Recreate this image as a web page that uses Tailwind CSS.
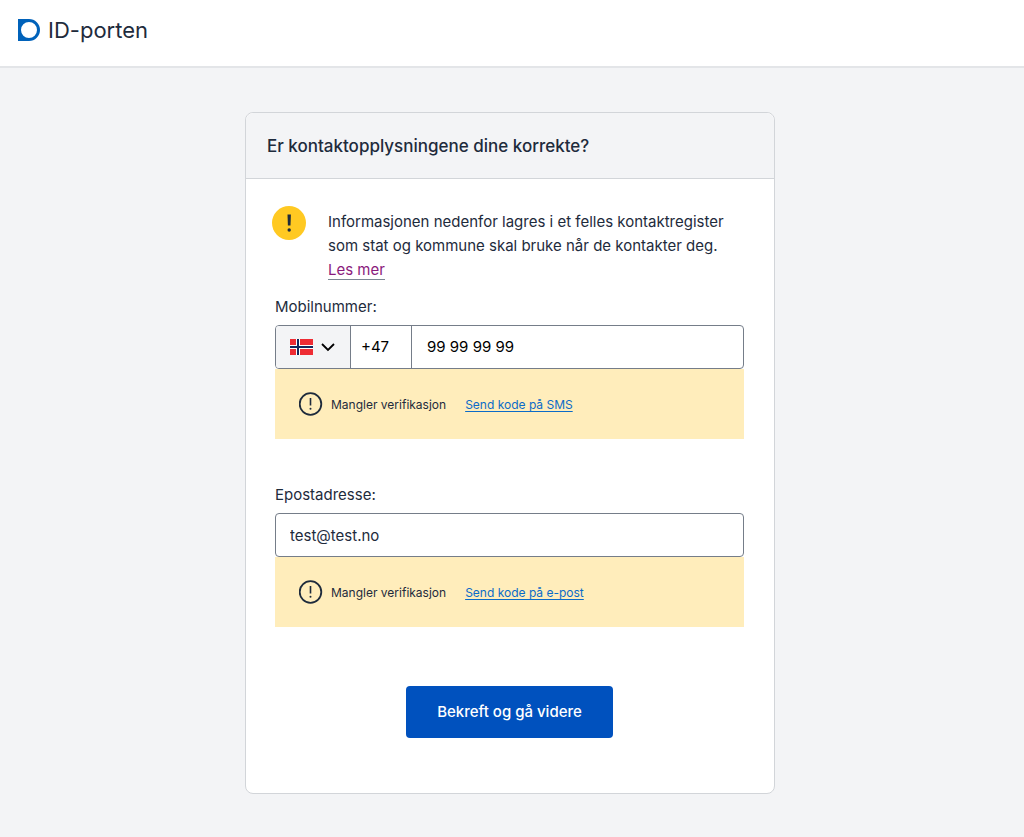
<!DOCTYPE html>
<html lang="no">

<head>
  <meta charset="UTF-8" />
  <meta name="viewport" content="width=device-width, initial-scale=1.0" />
  <title>ID-porten</title>

  <script src="https://cdn.jsdelivr.net/npm/@tailwindcss/browser@4"></script>
</head>

<body class="min-h-screen bg-[#f3f4f6] font-['Inter',sans-serif] text-[15px] leading-6 text-[#1e2b3c]">

  <header class="border-b-2 border-[#e3e5e8] bg-white px-[18px] pt-[18px] pb-6">
    <a href="#" class="flex items-center gap-2">
      <svg class="h-[22px] w-[22px]" viewBox="0 0 22 22" aria-hidden="true">
        <path fill="#0062ba" fill-rule="evenodd" d="M0 0h11a11 11 0 0 1 0 22H0zM11 3a8 8 0 1 0 0 16a8 8 0 0 0 0-16z" />
      </svg>
      <span class="text-[22px] leading-6">ID-porten</span>
    </a>
  </header>

  <main class="pt-11 pr-1 pb-11">
    <form class="mx-auto max-w-[530px] rounded-lg border border-[#d2d5d9] bg-white">

      <div class="rounded-t-lg border-b border-[#d2d5d9] bg-[#f3f4f6] px-[21px] pt-[21px] pb-5">
        <h1 class="text-[17px] leading-6 font-medium">Er kontaktopplysningene dine korrekte?</h1>
      </div>

      <div class="pt-[31px] pr-[30px] pb-[55px] pl-[29px]">

        <!-- Info -->
        <div class="-ml-[3px] flex items-start gap-[22px]">
          <svg class="-mt-1 h-[34px] w-[34px] shrink-0" viewBox="0 0 34 34" aria-hidden="true">
            <circle cx="17" cy="17" r="17" fill="#ffc922" />
            <path fill="#1e2b3c" d="M15.5 8.5h3.4l-.4 11h-2.6z" />
            <circle cx="17.2" cy="24" r="1.7" fill="#1e2b3c" />
          </svg>
          <p>
            Informasjonen nedenfor lagres i et felles kontaktregister som stat og kommune skal bruke når de kontakter deg.
            <a href="#" class="border-b border-[#7b8794] text-[#8a1a7c]">Les mer</a>
          </p>
        </div>

        <!-- Mobilnummer -->
        <div class="mt-[13px]">
          <label for="mobil" class="mb-1.5 block">Mobilnummer:</label>
          <div class="flex h-[44px] overflow-hidden rounded border border-[#757d89] bg-white text-black">
            <button type="button" aria-label="Velg land" class="flex w-[75px] items-center gap-2 border-r border-[#757d89] bg-[#f3f4f6] pl-3.5">
              <svg class="h-4 w-[23px]" viewBox="0 0 23 16" aria-hidden="true">
                <path fill="#ee2c34" d="M0 0h23v16H0z" />
                <path fill="#fff" d="M6 0h4v16H6zM0 6h23v4H0z" />
                <path fill="#12285c" d="M7 0h2v16H7zM0 7h23v2H0z" />
              </svg>
              <svg class="h-3.5 w-3.5" viewBox="0 0 14 14" fill="none" stroke="currentColor" stroke-width="1.8" aria-hidden="true">
                <path d="M1 4l6 6l6-6" />
              </svg>
            </button>
            <span class="flex w-[61px] items-center border-r border-[#757d89] pl-2.5">+47</span>
            <input id="mobil" type="tel" value="99 99 99 99" class="min-w-0 flex-1 px-[15px] outline-none" />
          </div>
          <div class="flex h-[70px] items-center bg-[#ffedbb] pl-6 text-[12px]">
            <svg class="h-6 w-6" viewBox="0 0 24 24" fill="none" stroke="#1e2b3c" aria-hidden="true">
              <circle cx="11.5" cy="12" r="10.8" stroke-width="1.8" />
              <path d="M11.5 6v7.5" stroke-width="1.6" />
              <circle cx="11.5" cy="16.8" r="1" fill="#1e2b3c" stroke="none" />
            </svg>
            <p class="ml-2 flex gap-[19px] pt-0.5">
              <span>Mangler verifikasjon</span>
              <a href="#" class="text-[#0b6bc8] underline underline-offset-2">Send kode på SMS</a>
            </p>
          </div>
        </div>

        <!-- Epostadresse -->
        <div class="mt-11">
          <label for="epost" class="mb-1.5 block">Epostadresse:</label>
          <input id="epost" type="email" value="test@test.no" class="block h-[44px] w-full rounded border border-[#757d89] bg-white px-3.5 outline-none" />
          <div class="flex h-[70px] items-center bg-[#ffedbb] pl-6 text-[12px]">
            <svg class="h-6 w-6" viewBox="0 0 24 24" fill="none" stroke="#1e2b3c" aria-hidden="true">
              <circle cx="11.5" cy="12" r="10.8" stroke-width="1.8" />
              <path d="M11.5 6v7.5" stroke-width="1.6" />
              <circle cx="11.5" cy="16.8" r="1" fill="#1e2b3c" stroke="none" />
            </svg>
            <p class="ml-2 flex gap-[19px] pt-0.5">
              <span>Mangler verifikasjon</span>
              <a href="#" class="text-[#0b6bc8] underline underline-offset-2">Send kode på e-post</a>
            </p>
          </div>
        </div>

        <button type="submit" class="mx-auto mt-[59px] block h-[52px] w-[207px] rounded bg-[#0051be] font-medium text-white">Bekreft og gå videre</button>
      </div>
    </form>
  </main>

</body>

</html>
